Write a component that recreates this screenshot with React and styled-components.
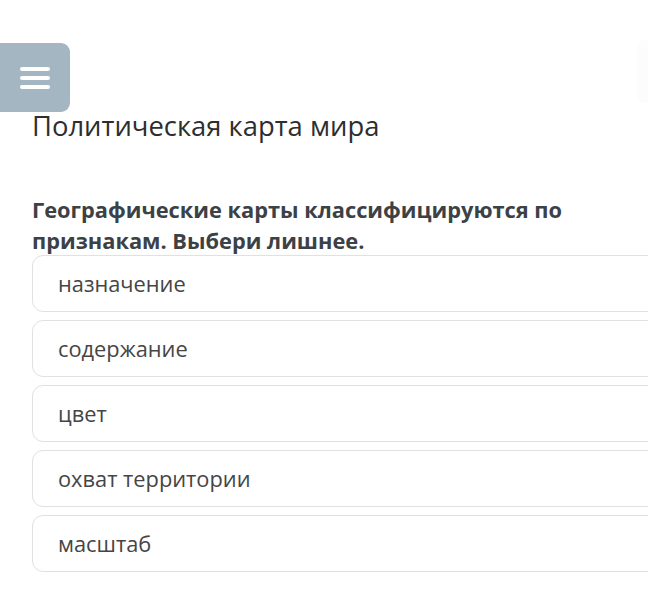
import React from 'react';
import styled, { createGlobalStyle } from 'styled-components';

const Global = createGlobalStyle`
  body {
    margin: 0;
    background: #ffffff;
    font-family: "Open Sans", "Noto Sans", sans-serif;
    overflow: hidden;
  }
`;

const Page = styled.div`
  position: relative;
  width: 648px;
  height: 615px;
  overflow: hidden;
  background: #fff;
`;

const TopBar = styled.div`
  display: flex;
  justify-content: space-between;
  align-items: flex-start;
  padding-top: 43px;
  height: 69px;
`;

// Menu button that sits flush with the left edge
const MenuButton = styled.button`
  width: 70px;
  height: 69px;
  border: 0;
  border-radius: 0 9px 9px 0;
  background: #a5b6c3;
  display: flex;
  flex-direction: column;
  justify-content: center;
  align-items: center;
  gap: 5px;
  padding: 0;
  cursor: pointer;
`;

const Bar = styled.span`
  display: block;
  width: 30px;
  height: 4px;
  border-radius: 2px;
  background: #fff;
`;

const Ghost = styled.div`
  width: 10px;
  height: 63px;
  margin-top: -3px;
  border-radius: 6px 0 0 6px;
  background: #fcfcfc;
`;

const Content = styled.div`
  padding-left: 32px;
  width: 640px;
`;

const Title = styled.h1`
  margin: 0;
  font-size: 27.4px;
  font-weight: 400;
  color: #2e2e2e;
  line-height: 30px;
  margin-top: -1px;
`;

const Question = styled.p`
  margin: 53px 0 0 0;
  width: 580px;
  font-size: 21.8px;
  font-weight: 700;
  line-height: 31px;
  color: #3c4146;
`;

const Options = styled.div`
  display: flex;
  flex-direction: column;
  gap: 8px;
  margin-top: -1px;
`;

const Option = styled.div`
  box-sizing: border-box;
  height: 57px;
  display: flex;
  align-items: center;
  padding-left: 25px;
  border: 1px solid #e1e1e1;
  border-radius: 11px;
  font-size: 21.8px;
  color: #454545;
  background: #fff;
`;

const answers = ['назначение', 'содержание', 'цвет', 'охват территории', 'масштаб'];

export default function App() {
  return (
    <Page>
      <Global />
      <TopBar>
        <MenuButton aria-label="menu">
          <Bar />
          <Bar />
          <Bar />
        </MenuButton>
        <Ghost />
      </TopBar>
      <Content>
        <Title>Политическая карта мира</Title>
        <Question>Географические карты классифицируются по признакам. Выбери лишнее.</Question>
        <Options>
          {answers.map((a) => (
            <Option key={a}>{a}</Option>
          ))}
        </Options>
      </Content>
    </Page>
  );
}
